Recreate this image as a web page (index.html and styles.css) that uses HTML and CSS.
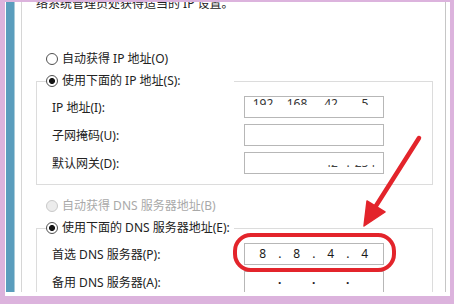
FILE: index.html
```html
<!DOCTYPE html>
<html lang="zh-CN">
<head>
<meta charset="utf-8">
<title>IPv4 属性</title>
<link rel="stylesheet" href="styles.css">
</head>
<body>
<div class="frame">
  <div class="rail"></div>
  <div class="pane">
    <p class="intro">络系统管理员处获得适当的 IP 设置。</p>

    <div class="radio-row first"><span class="radio"></span><span>自动获得 IP 地址(O)</span></div>

    <fieldset class="group">
      <legend><div class="radio-row legend-row"><span class="radio checked"></span><span>使用下面的 IP 地址(S):</span></div></legend>
      <div class="rows">
        <div class="row">
          <span class="label">IP 地址(I):</span>
          <div class="ipbox top-strip">
            <div class="segs"><span class="seg">192</span><span class="dot">.</span><span class="seg">168</span><span class="dot">.</span><span class="seg">42</span><span class="dot">.</span><span class="seg">5</span></div>
          </div>
        </div>
        <div class="row">
          <span class="label">子网掩码(U):</span>
          <div class="ipbox"></div>
        </div>
        <div class="row">
          <span class="label">默认网关(D):</span>
          <div class="ipbox bottom-strip">
            <div class="strip"><div class="segs"><span class="seg"></span><span class="seg"></span><span class="seg">42</span><span class="dot">.</span><span class="seg">254</span></div></div>
          </div>
        </div>
      </div>
    </fieldset>

    <div class="radio-row dns-auto disabled"><span class="radio"></span><span>自动获得 DNS 服务器地址(B)</span></div>

    <fieldset class="group">
      <legend><div class="radio-row legend-row wide"><span class="radio checked"></span><span>使用下面的 DNS 服务器地址(E):</span></div></legend>
      <div class="rows">
        <div class="row">
          <span class="label">首选 DNS 服务器(P):</span>
          <div class="ipbox">
            <div class="segs mono"><span class="seg">8</span><span class="dot">.</span><span class="seg">8</span><span class="dot">.</span><span class="seg">4</span><span class="dot">.</span><span class="seg">4</span></div>
          </div>
        </div>
        <div class="row">
          <span class="label">备用 DNS 服务器(A):</span>
          <div class="ipbox empty-dots">
            <div class="segs mono"><span class="seg"></span><span class="dot">.</span><span class="seg"></span><span class="dot">.</span><span class="seg"></span><span class="dot">.</span><span class="seg"></span></div>
          </div>
        </div>
      </div>
    </fieldset>
  </div>
</div>

<svg class="annot" width="454" height="304" viewBox="0 0 454 304" aria-hidden="true">
  <rect x="235" y="235" width="159" height="35" rx="16" ry="16" fill="none" stroke="#e3242b" stroke-width="4"/>
  <line x1="419" y1="138" x2="374" y2="209" stroke="#e3242b" stroke-width="4.5" stroke-linecap="round"/>
  <polygon points="367,201 385,212 364,226" fill="#e3242b" stroke="#e3242b" stroke-width="1.5" stroke-linejoin="round"/>
</svg>
</body>
</html>
```

FILE: styles.css
```css
html, body {
  margin: 0;
  padding: 0;
}

body {
  width: 454px;
  height: 304px;
  overflow: hidden;
  position: relative;
  background: #dcb3dd;
  font-family: "Noto Sans", "Noto Sans CJK SC", sans-serif;
  font-size: 12px;
  color: #222;
}

.frame {
  display: flex;
  margin: 2px 4px 0 5px;
  height: 294px;
  box-sizing: border-box;
  padding: 0 4px 4px 1px;
  background: #fff;
}

.rail {
  width: 8px;
  flex: none;
  background: #5a9dbd;
  border-right: 1px solid #a9cbd9;
  margin-right: 6px;
}

.pane {
  flex: 1;
  min-width: 0;
  border-left: 1px solid #d6d6d6;
  border-right: 1px solid #c6c6c6;
  overflow: hidden;
  padding-left: 14px;
}

.intro {
  margin: -6px 0 0;
  line-height: 16px;
  white-space: nowrap;
}

.radio-row {
  display: flex;
  align-items: center;
  gap: 4px;
  height: 16px;
  line-height: 16px;
  padding-left: 10px;
  white-space: nowrap;
}

.first {
  margin-top: 39px;
}

.dns-auto {
  margin-top: 13px;
}

.radio {
  flex: none;
  width: 12px;
  height: 12px;
  box-sizing: border-box;
  border: 1px solid #505050;
  border-radius: 50%;
  background: #fff;
}

.radio.checked {
  background: radial-gradient(circle, #151515 0 2.6px, #fff 3.4px);
}

.disabled {
  color: #a9a9a9;
}

.disabled .radio {
  border-color: #c9c9c9;
  background: #ececec;
}

.group {
  margin: 6px 0 0;
  padding: 0;
  width: 397px;
  min-width: 0;
  box-sizing: border-box;
  border: 1px solid #dcdcdc;
}

.group legend {
  padding: 0;
  margin-left: 9px;
  width: 188px;
}

.legend-row {
  padding-left: 0;
}

.wide {
  width: 190px;
}

.rows {
  display: flex;
  flex-direction: column;
  gap: 6px;
  padding: 7px 48px 10px 15px;
}

.row {
  display: flex;
  align-items: center;
  justify-content: space-between;
  height: 22px;
  white-space: nowrap;
}

.ipbox {
  width: 140px;
  height: 22px;
  box-sizing: border-box;
  border: 1px solid #b7b7b7;
  padding: 0 1px;
  display: flex;
  align-items: center;
  flex: none;
}

.segs {
  flex: 1;
  display: flex;
  line-height: 14px;
  color: #1a1a1a;
}

.seg {
  flex: 1;
  text-align: center;
}

.dot {
  width: 0;
  display: flex;
  justify-content: center;
}

.mono {
  letter-spacing: 0.5px;
}

/* only the upper part of the first address is legible in the shot */
.top-strip {
  align-items: flex-start;
}

.top-strip .segs {
  height: 8px;
  overflow: hidden;
  color: #333;
}

/* only the lower edge of the gateway digits shows */
.bottom-strip {
  align-items: flex-start;
}

.bottom-strip .strip {
  flex: 1;
  display: flex;
  margin-top: 12px;
  height: 4px;
  overflow: hidden;
}

.bottom-strip .segs {
  margin-top: -9px;
  height: 14px;
  color: #444;
}

.empty-dots {
  align-items: flex-start;
  padding-top: 1px;
}

.empty-dots .dot {
  font-weight: 700;
}

.annot {
  position: absolute;
  left: 0;
  top: 0;
  pointer-events: none;
}
```
